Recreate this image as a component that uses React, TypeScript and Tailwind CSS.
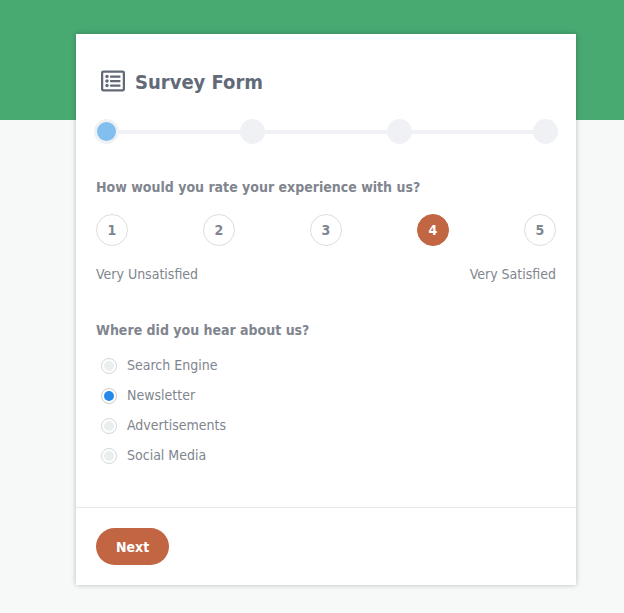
import { useState } from "react";
import { FaRegListAlt } from "react-icons/fa";

const STEPS = ["Step 1", "Step 2", "Step 3", "Step 4"];
const RATINGS = [1, 2, 3, 4, 5];
const SOURCES = ["Search Engine", "Newsletter", "Advertisements", "Social Media"];

function Steps({ current }: { current: number }) {
  return (
    <ol className="-mx-0.5 flex items-center justify-between bg-[linear-gradient(#f0f1f5,#f0f1f5)] bg-size-[calc(100%-12px)_4px] bg-right bg-no-repeat">
      {STEPS.map((step, index) => (
        <li
          key={step}
          aria-label={step}
          aria-current={index === current ? "step" : undefined}
          className={`size-[25px] rounded-full border-3 border-[#f0f1f5] ${
            index === current ? "bg-[#82bfef]" : "bg-[#f0f1f5]"
          }`}
        />
      ))}
    </ol>
  );
}

function Rating({ value, onChange }: { value: number; onChange: (value: number) => void }) {
  return (
    <fieldset>
      <legend className="leading-[22px] font-bold">How would you rate your experience with us?</legend>
      <div className="mt-4 flex justify-between">
        {RATINGS.map((rating) => (
          <label
            key={rating}
            className="flex size-8 cursor-pointer items-center justify-center rounded-full border border-[#dddddd] font-bold has-checked:border-[#c16543] has-checked:bg-[#c16543] has-checked:text-white"
          >
            <input
              type="radio"
              name="rating"
              value={rating}
              checked={value === rating}
              onChange={() => onChange(rating)}
              className="sr-only"
            />
            {rating}
          </label>
        ))}
      </div>
      <div className="mt-4 flex justify-between leading-6">
        <span>Very Unsatisfied</span>
        <span>Very Satisfied</span>
      </div>
    </fieldset>
  );
}

function Sources({ value, onChange }: { value: string; onChange: (value: string) => void }) {
  return (
    <fieldset className="mt-[33px]">
      <legend className="leading-[22px] font-bold">Where did you hear about us?</legend>
      <div className="mt-[9px]">
        {SOURCES.map((source) => (
          <label key={source} className="flex h-[30px] cursor-pointer items-center gap-2.5 pl-[5px]">
            <input
              type="radio"
              name="source"
              value={source}
              checked={value === source}
              onChange={() => onChange(source)}
              className="mt-0.5 size-4 appearance-none rounded-full border border-[#d5d8d8] bg-[#ebeeee] bg-clip-content p-0.5 checked:border-[#cccccc] checked:bg-[#2489e9]"
            />
            {source}
          </label>
        ))}
      </div>
    </fieldset>
  );
}

export default function App() {
  const [rating, setRating] = useState(4);
  const [source, setSource] = useState("Newsletter");

  return (
    <div className="min-h-screen bg-[#f7f9f8] font-['DejaVu_Sans_Condensed','Noto_Sans',sans-serif] text-sm text-[#80858e]">
      <div className="h-[120px] bg-[#48a971]" />
      <main className="-mt-[86px] pr-12 pb-7 pl-[76px]">
        <form
          onSubmit={(event) => event.preventDefault()}
          className="bg-white shadow-[0_0_5px_rgba(0,0,0,0.25)]"
        >
          <div className="px-5 pt-8 pb-[37px]">
            <h1 className="flex h-8 items-center gap-2.5 pl-[5px] text-xl font-bold text-[#626a78]">
              <FaRegListAlt size={24} aria-hidden="true" className="mb-0.5" />
              Survey Form
            </h1>
            <div className="mt-[21px] mb-8">
              <Steps current={0} />
            </div>
            <Rating value={rating} onChange={setRating} />
            <Sources value={source} onChange={setSource} />
          </div>
          <div className="border-t border-[#e6e8ea] p-5">
            <button
              type="submit"
              className="h-[37px] cursor-pointer rounded-full bg-[#c16543] px-5 font-bold text-white"
            >
              Next
            </button>
          </div>
        </form>
      </main>
    </div>
  );
}
